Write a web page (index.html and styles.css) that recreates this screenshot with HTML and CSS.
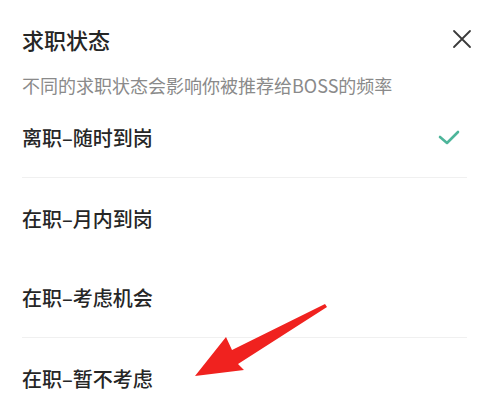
FILE: index.html
```html
<!DOCTYPE html>
<html lang="zh-CN">
<head>
<meta charset="utf-8">
<link rel="stylesheet" href="styles.css">
</head>
<body>
<div class="sheet">
  <div class="header">
    <h1 class="title">求职状态</h1>
    <svg class="close" width="20" height="20" viewBox="0 0 20 20"><path d="M2 2 L18 18 M18 2 L2 18" stroke="#3a3a3a" stroke-width="1.8" fill="none" stroke-linecap="round"/></svg>
  </div>
  <p class="subtitle">不同的求职状态会影响你被推荐给BOSS的频率</p>
  <ul class="options">
    <li class="option divided"><span>离职–随时到岗</span>
      <svg class="check" width="24" height="18" viewBox="0 0 24 18"><path d="M3 8 L10 14 L21 3" stroke="#4db59a" stroke-width="2.6" fill="none" stroke-linecap="round" stroke-linejoin="round"/></svg>
    </li>
    <li class="option"><span>在职–月内到岗</span></li>
    <li class="option divided"><span>在职–考虑机会</span></li>
    <li class="option"><span>在职–暂不考虑</span></li>
  </ul>
  <svg class="arrow" width="490" height="401" viewBox="0 0 490 401"><polygon points="195,376 226,337 232,350 325,304 327,307 238,364 244,370" fill="#f0221f"/></svg>
</div>
</body>
</html>
```

FILE: styles.css
```css
html, body {
  margin: 0;
  padding: 0;
  background: #ffffff;
}
body {
  font-family: "Noto Sans CJK SC", "Noto Sans", sans-serif;
  color: #2b2b2b;
}
.sheet {
  position: relative;
  width: 490px;
  height: 401px;
  overflow: hidden;
  padding: 0 23px 0 22px;
  box-sizing: border-box;
}
.header {
  display: flex;
  align-items: center;
  justify-content: space-between;
  height: 64px;
  padding-top: 14px;
  box-sizing: border-box;
}
.title {
  margin: 0;
  font-size: 22px;
  font-weight: 500;
  line-height: 30px;
  color: #262626;
}
.close {
  margin-right: -5px;
}
.subtitle {
  margin: 8px 0 0;
  font-size: 18px;
  line-height: 26px;
  height: 26px;
  color: #8a8a8a;
}
.options {
  list-style: none;
  margin: 0;
  padding: 0;
}
.option {
  display: flex;
  align-items: center;
  justify-content: space-between;
  height: 80px;
  box-sizing: border-box;
  font-size: 20px;
  font-weight: 500;
  color: #262626;
}
.option.divided {
  border-bottom: 1px solid #f0f0f0;
}
.check {
  margin-right: 6px;
}
.arrow {
  position: absolute;
  left: 0;
  top: 0;
  pointer-events: none;
}
```
